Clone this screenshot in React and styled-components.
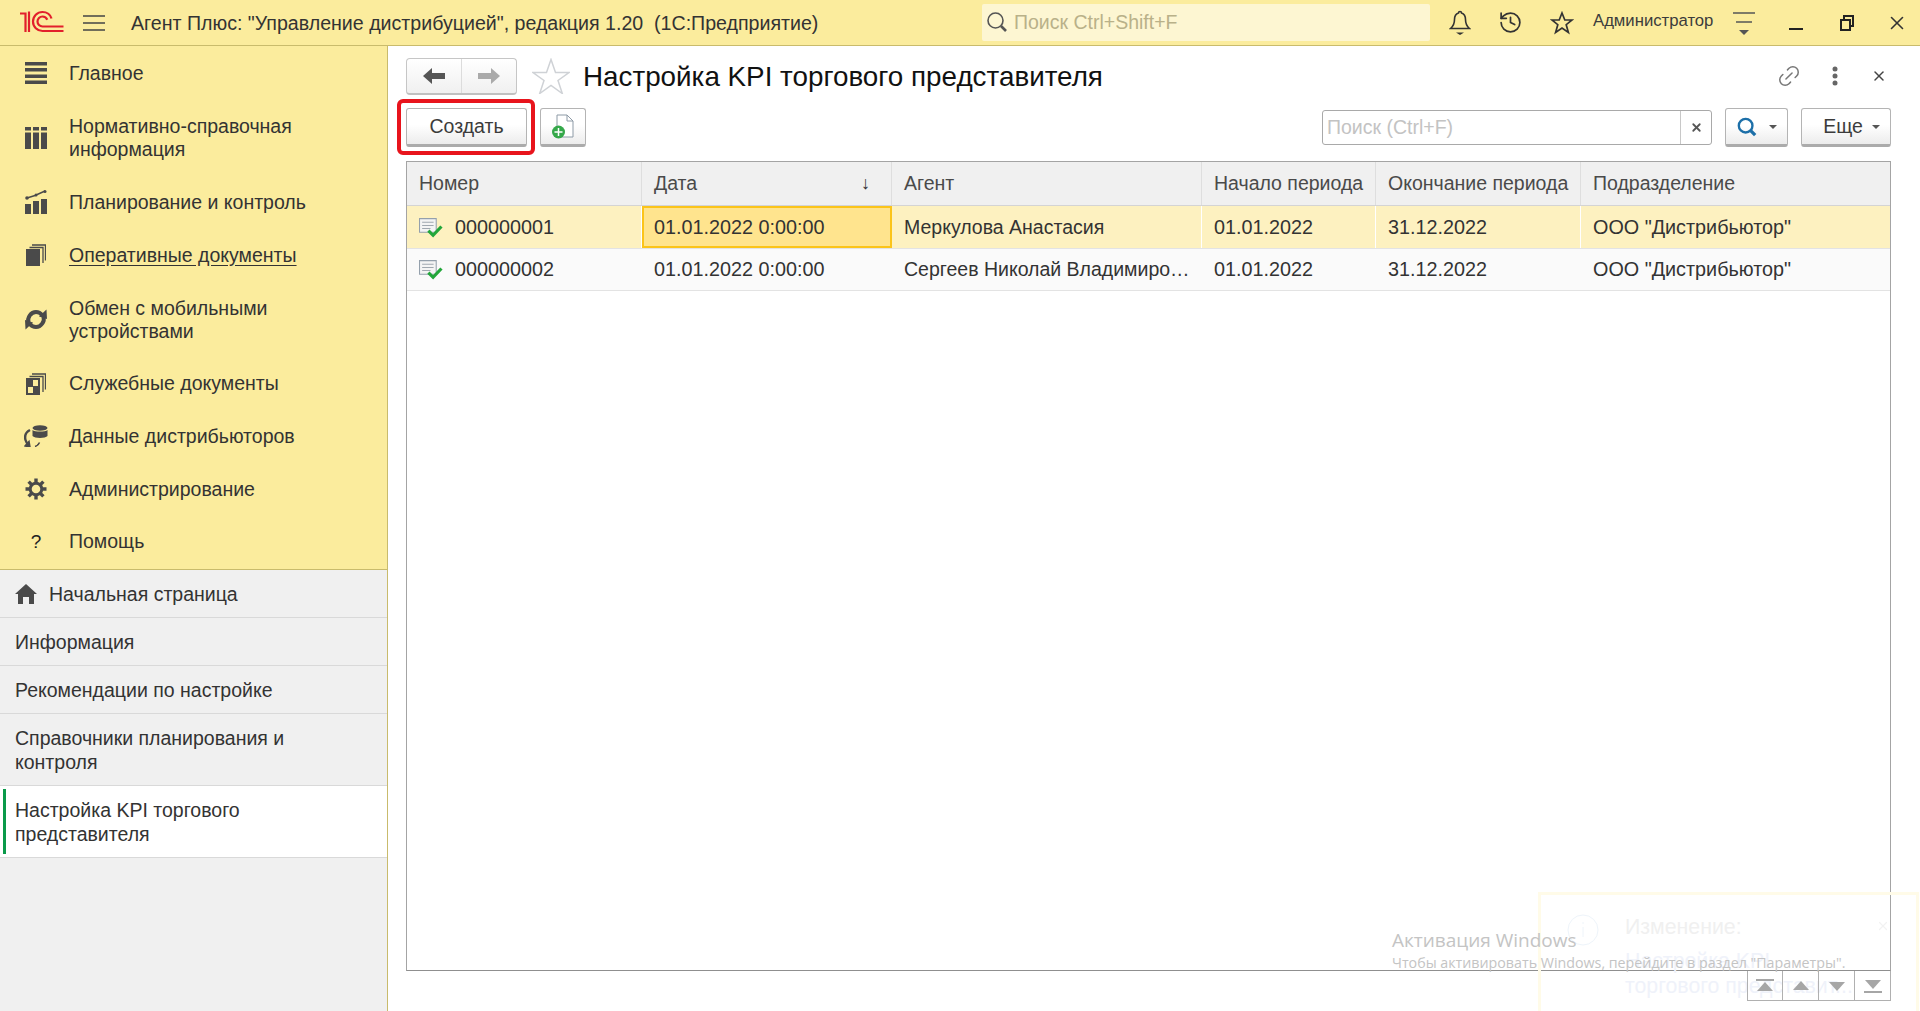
import React from 'react';
import styled, { createGlobalStyle } from 'styled-components';
import { History, Link2, X } from 'lucide-react';

const GlobalStyle = createGlobalStyle`
  html, body { margin: 0; padding: 0; height: 100%; background: #fff; }
  body { font-family: "Liberation Sans", Arial, sans-serif; overflow: hidden; }
  #root { height: 100%; }
  * { box-sizing: border-box; }
`;

const Page = styled.div`
  width: 1920px;
  height: 1011px;
  display: flex;
  flex-direction: column;
  position: relative;
  overflow: hidden;
`;

/* top bar */
const TopBar = styled.header`
  height: 46px;
  flex: none;
  display: flex;
  align-items: center;
  background: #fbec9d;
  border-bottom: 1px solid #c9bb6c;
  color: #333;
  overflow: hidden;
`;

const Logo = styled.svg`
  width: 44px;
  height: 24px;
  margin: 0 0 2px 20px;
  flex: none;
`;

const Burger = styled.svg`
  width: 22px;
  height: 16px;
  margin: 0 0 0 19px;
  flex: none;
`;

const AppTitle = styled.div`
  margin: 1px 0 0 26px;
  width: 851px;
  flex: none;
  font-size: 19.6px;
  white-space: pre;
  color: #333;
`;

const TopSearch = styled.div`
  width: 448px;
  height: 37px;
  flex: none;
  margin-bottom: 1px;
  background: #fdf6d2;
  border-radius: 2px;
  display: flex;
  align-items: center;
  padding-left: 4px;
  gap: 6px;
  font-size: 19.5px;
  color: #b9b189;
`;

const TopIcons = styled.div`
  display: flex;
  align-items: center;
  flex: none;
  margin-left: 4px;
`;

const TopIcon = styled.span`
  width: ${(props) => props.$w || 51}px;
  flex: none;
  display: flex;
  justify-content: center;
  align-items: center;
  color: #333;
`;

const UserName = styled.div`
  font-size: 16.7px;
  width: 138px;
  flex: none;
  margin-left: 6px;
  margin-bottom: 3px;
  color: #3c3c3c;
  white-space: nowrap;
`;

/* body */
const Body = styled.div`
  flex: 1;
  display: flex;
  min-height: 0;
`;

const Sidebar = styled.aside`
  width: 388px;
  flex: none;
  display: flex;
  flex-direction: column;
  background: #f0f0f0;
  border-right: 1px solid #c9bb6c;
`;

const NavList = styled.nav`
  height: 524px;
  flex: none;
  padding-top: 1px;
  background: #fbec9d;
  border-bottom: 1px solid #c9bb6c;
  overflow: hidden;
`;

const NavItem = styled.div`
  display: flex;
  align-items: center;
  padding: 14.85px 20px 14.85px 0;
  font-size: 19.5px;
  line-height: 23px;
  color: #333;
`;

const NavIcon = styled.span`
  width: 69px;
  flex: none;
  display: flex;
  justify-content: center;
  padding-left: 3px;
  color: #4a4a4a;
`;

const NavText = styled.span`
  text-decoration: ${(props) => (props.$link ? 'underline' : 'none')};
  text-underline-offset: 3px;
`;

const Question = styled.span`
  font-size: 19px;
  color: #222;
`;

const OpenTab = styled.div`
  position: relative;
  display: flex;
  align-items: center;
  gap: 12px;
  padding: 12px 15px 11px;
  font-size: 19.5px;
  line-height: 24px;
  color: #333;
  background: ${(props) => (props.$active ? '#fff' : '#f0f0f0')};
  border-bottom: 1px solid #d9d9d9;
  &::before {
    content: ${(props) => (props.$active ? '""' : 'none')};
    position: absolute;
    left: 3px;
    top: 3px;
    bottom: 3px;
    width: 3px;
    background: #0a9a4a;
  }
`;

/* main form */
const Main = styled.main`
  flex: 1;
  min-width: 0;
  display: flex;
  flex-direction: column;
  padding: 12px 29px 10px 18px;
  background: #fff;
`;

const FormHeader = styled.div`
  height: 36px;
  flex: none;
  display: flex;
  align-items: center;
`;

const NavGroup = styled.div`
  width: 111px;
  height: 37px;
  display: flex;
  border: 1px solid #c6c6c6;
  border-bottom: 2px solid #c0c0c0;
  border-radius: 4px;
  background: linear-gradient(#fff, #f0f0f0);
`;

const NavArrow = styled.span`
  flex: 1;
  display: flex;
  align-items: center;
  justify-content: center;
  & + & { border-left: 1px solid #dcdcdc; }
`;

const FavStar = styled.svg`
  width: 38px;
  height: 36px;
  margin-left: 15px;
  flex: none;
`;

const FormTitle = styled.h1`
  margin: 2px 0 0 13px;
  font-size: 27.8px;
  font-weight: 400;
  color: #111;
  flex: 1;
  white-space: nowrap;
`;

const FormActions = styled.div`
  display: flex;
  align-items: center;
  color: #777;
`;

const ActionIcon = styled.span`
  width: ${(props) => props.$w || 45}px;
  display: flex;
  justify-content: center;
  align-items: center;
`;

const Toolbar = styled.div`
  height: 39px;
  margin-top: 14px;
  flex: none;
  display: flex;
  align-items: center;
`;

const Button = styled.button`
  width: ${(props) => props.$w}px;
  height: 39px;
  padding: 0 0 0 ${(props) => props.$pad || 0}px;
  margin-left: ${(props) => props.$ml || 0}px;
  flex: none;
  display: flex;
  align-items: center;
  justify-content: center;
  gap: ${(props) => props.$gap || 0}px;
  font-family: inherit;
  font-size: 19.5px;
  color: #3c3c3c;
  background: linear-gradient(#fff 45%, #ececec);
  border: 1px solid #b4b4b4;
  border-bottom: 3px solid #ababab;
  border-radius: 3px;
`;

const Marked = styled.div`
  position: relative;
  margin-right: 13px;
  &::after {
    content: "";
    position: absolute;
    inset: -9px -8px -8px -9px;
    border: 4px solid #e8141c;
    border-radius: 6px;
    pointer-events: none;
  }
`;

const Caret = styled.i`
  width: 0;
  height: 0;
  border-left: 4px solid transparent;
  border-right: 4px solid transparent;
  border-top: 4px solid #555;
`;

const SearchField = styled.div`
  width: 390px;
  height: 35px;
  margin-left: auto;
  display: flex;
  border: 1px solid #a9a9a9;
  border-radius: 3px;
  background: #fff;
`;

const SearchInput = styled.div`
  flex: 1;
  display: flex;
  align-items: center;
  padding-left: 4px;
  font-size: 19.5px;
  color: #c3c3c3;
`;

const SearchClear = styled.div`
  width: 31px;
  border-left: 1px solid #c8c8c8;
  display: flex;
  align-items: center;
  justify-content: center;
  color: #555;
`;

const TableBox = styled.div`
  flex: 1;
  margin-top: 14px;
  min-height: 0;
  border: 1px solid #a4a4a4;
  border-bottom-color: #8f8f8f;
`;

const Row = styled.div`
  display: grid;
  grid-template-columns: 235px 250px 310px 174px 205px 1fr;
  height: ${(props) => props.$h}px;
  background: ${(props) => props.$bg};
  border-bottom: 1px solid ${(props) => props.$line || '#e3e3e3'};
`;

const HeadCell = styled.div`
  display: flex;
  align-items: center;
  justify-content: space-between;
  padding: 0 21px 0 12px;
  font-size: 19.5px;
  color: #4a4a4a;
  border-right: 1px solid #dedede;
  white-space: nowrap;
  &:last-child { border-right: none; }
`;

const SortMark = styled.span`
  font-size: 18px;
  color: #333;
`;

const Cell = styled.div`
  display: flex;
  align-items: center;
  gap: 12px;
  padding: 0 12px;
  font-size: 19.8px;
  color: #333;
  white-space: nowrap;
  border-right: 1px solid ${(props) => (props.$sep ? '#fff' : 'transparent')};
  &:last-child { border-right: none; }
`;

const AgentCell = styled(Cell)`
  font-size: 19.5px;
`;

const FocusCell = styled(Cell)`
  padding: 0 10px;
  background: #ffe48e;
  border: 2px solid #fbc41a;
`;

const Pager = styled.div`
  height: 30px;
  flex: none;
  display: flex;
  justify-content: flex-end;
  position: relative;
  z-index: 1;
`;

const PagerButton = styled.span`
  width: 36px;
  display: flex;
  align-items: center;
  justify-content: center;
  border: 1px solid #b0b0b0;
  border-top: none;
  & + & { border-left: none; }
`;

/* things lying over the page */
const Notice = styled.div`
  position: absolute;
  left: 1538px;
  top: 892px;
  width: 381px;
  height: 119px;
  border: 3px solid #fffbe8;
  border-bottom: none;
  pointer-events: none;
`;

const NoticeIcon = styled.svg`
  position: absolute;
  left: 26px;
  top: 19px;
`;

const NoticeHead = styled.div`
  position: absolute;
  left: 84px;
  top: 20px;
  font-size: 21.3px;
  color: #f0f0f0;
`;

const NoticeBody = styled.div`
  position: absolute;
  left: 84px;
  top: 54px;
  font-size: 21.3px;
  line-height: 25px;
  color: #eff2fa;
  white-space: nowrap;
`;

const NoticeClose = styled.span`
  position: absolute;
  left: 335px;
  top: 24px;
  color: #f2f2f2;
`;

const Watermark = styled.div`
  position: absolute;
  left: 1392px;
  top: 927px;
  font-family: "Open Sans", sans-serif;
  color: #c4c4c4;
  pointer-events: none;
  white-space: nowrap;
`;

const WatermarkHead = styled.div`
  font-size: 19px;
  line-height: 26px;
`;

const WatermarkText = styled.div`
  font-size: 14.25px;
  line-height: 20px;
`;

const LogoMark = () => (
  <Logo viewBox="0 0 44 24" fill="none" stroke="#e2202c">
    <path d="M0 3.500h5.500V22" strokeWidth="2.200" />
    <path d="M9 1.500V22" strokeWidth="2.200" />
    <path d="M43.500 21H22.500a9.500 9.500 0 1 1 0-19c4.500 0 8 3 9 6.500" strokeWidth="2.200" />
    <path d="M43.500 16.500H22.500a5 5 0 1 1 0-10c2.300 0 4 1.300 4.800 3.200" strokeWidth="2.200" />
  </Logo>
);

const BurgerIcon = () => (
  <Burger viewBox="0 0 22 16" stroke="#444" strokeWidth="1.500">
    <path d="M0 1h22M0 8h22M0 15h22" />
  </Burger>
);

const Magnifier = ({ color = '#555', size = 22, width = 1.6 }) => (
  <svg width={size} height={size} viewBox="0 0 22 22" fill="none" stroke={color} strokeWidth={width}>
    <circle cx="9.500" cy="9.500" r="7.500" />
    <path d="M15 15l5 5" strokeWidth={width + 1} />
  </svg>
);

const BellIcon = () => (
  <svg width="22" height="26" viewBox="0 0 22 26" fill="none" stroke="#333" strokeWidth="1.600">
    <path d="M11 1.500c1 0 1.500.7 1.500 1.500 3 1 4 3.500 4 6.500 0 4 1.500 7 4 9H1.500c2.500-2 4-5 4-9 0-3 1-5.500 4-6.500 0-.8.5-1.500 1.500-1.500z" />
    <path d="M7 22.500h8l-4 2.500z" fill="#333" stroke="none" />
  </svg>
);

const StarLine = ({ size = 24 }) => (
  <svg width={size} height={size} viewBox="0 0 24 24" fill="none" stroke="#333" strokeWidth="1.700">
    <path d="M12 2l2.800 7h7.200l-5.800 4.700 2.200 7.800L12 17l-6.400 4.500 2.200-7.800L2 9h7.200z" />
  </svg>
);

const FilterLines = () => (
  <svg width="22" height="24" viewBox="0 0 22 24" stroke="#555" strokeWidth="1.500">
    <path d="M0 2h22M3 11h16" />
    <path d="M6 19h10l-5 5z" fill="#555" stroke="none" />
  </svg>
);

const NavSvg = ({ children, w = 22, h = 22 }) => (
  <svg width={w} height={h} viewBox={`0 0 ${w} ${h}`} fill="#4a4a4a">{children}</svg>
);

const MainIcon = () => (
  <NavSvg>
    <path d="M0 0h22v3.500H0zM0 6h22v3.500H0zM0 12.500h22V16H0zM0 18.500h22V22H0z" />
  </NavSvg>
);

const CatalogIcon = () => (
  <NavSvg>
    <path d="M0 0h6v3.500H0zM8 0h6v3.500H8zM16 0h6v3.500h-6zM0 5.500h6V22H0zM8 5.500h6V22H8zM16 5.500h6V22h-6z" />
  </NavSvg>
);

const ChartIcon = () => (
  <NavSvg h={24}>
    <path d="M0 14h6v10H0zM8 11h6v13H8zM16 9h6v15h-6z" />
    <path d="M2 8l8-2.500L20 1" stroke="#4a4a4a" strokeWidth="1.400" fill="none" />
    <circle cx="2" cy="8" r="1.800" />
    <circle cx="11" cy="5" r="1.500" />
    <circle cx="20" cy="1.500" r="1.500" />
  </NavSvg>
);

const DocsIcon = ({ checker }) => (
  <NavSvg w={20} h={22}>
    <path d="M0 5h14v17H0z" />
    {checker && <path d="M7 7h5v6H7zM2 14h5v6H2z" fill="#fbec9d" />}
    <path d="M3.500 3.500h13.500v15.500M6 1h13.500v15.500" fill="none" stroke="#4a4a4a" strokeWidth="1.300" />
  </NavSvg>
);

const SyncIcon = () => (
  <NavSvg h={23}>
    <g fill="none" stroke="#4a4a4a" strokeWidth="4">
      <path d="M3.500 14.500C2 9.500 6 4 11 4c2.500 0 4.500 1 6 3" />
      <path d="M18.500 8.500C20 13.500 16 19 11 19c-2.500 0-4.500-1-6-3" />
    </g>
    <path d="M21.500 1.500l.5 9.500-8-2.500zM.5 21.500l-.5-9.500 8 2.500z" />
  </NavSvg>
);

const DataIcon = () => (
  <NavSvg w={24} h={22}>
    <ellipse cx="16" cy="3" rx="7.500" ry="2.800" />
    <path d="M8.500 5c2 2 13 2 15 0v6c-2 2.500-13 2.500-15 0z" />
    <path d="M6 5C2 7 .5 11 1.500 15c.5 2 1.700 3.500 3 4.500" fill="none" stroke="#4a4a4a" strokeWidth="2.400" />
    <path d="M5 16.500l1 5.500-5-1zM11 21.500c2-.5 3.500-1.500 4.500-4" fill="#4a4a4a" stroke="#4a4a4a" strokeWidth="1.500" />
  </NavSvg>
);

const GearIcon = () => (
  <NavSvg>
    <circle cx="11" cy="11" r="5.800" fill="none" stroke="#4a4a4a" strokeWidth="3" />
    <g stroke="#4a4a4a" strokeWidth="3.400">
      <path d="M11 .5v4M11 17.500v4M.5 11h4M17.500 11h4M3.600 3.600l2.800 2.800M15.600 15.600l2.800 2.800M18.400 3.600l-2.800 2.800M6.400 15.600l-2.800 2.800" />
    </g>
  </NavSvg>
);

const HomeIcon = () => (
  <svg width="22" height="20" viewBox="0 0 22 20" fill="#4a4a4a">
    <path d="M11 0l11 10h-3v10h-5v-7H8v7H3V10H0z" />
  </svg>
);

const ArrowIcon = ({ left, color }) => (
  <svg width="22" height="16" viewBox="0 0 22 16" fill={color}>
    <path d={left ? 'M0 8l9-8v5h13v6H9v5z' : 'M22 8l-9-8v5H0v6h13v5z'} />
  </svg>
);

const RowDoc = () => (
  <svg width="24" height="21" viewBox="0 0 23 20" fill="none">
    <path d="M.5 1.500h16v13H.5z" fill="#f4f4f4" stroke="#94a0ac" />
    <path d="M3 5h11M3 8h11M3 11h8" stroke="#a0a8b0" />
    <path d="M9 13l4.500 4.500L21.500 9" stroke="#22a63a" strokeWidth="3" />
  </svg>
);

const AddDoc = () => (
  <svg width="24" height="26" viewBox="0 0 24 26" fill="none">
    <path d="M6 1h10l6 6v16H6z" fill="#fff" stroke="#8d9aa6" />
    <path d="M16 1v6h6" stroke="#8d9aa6" />
    <circle cx="7.500" cy="18" r="6.500" fill="#35a84a" />
    <path d="M7.500 14v8M3.500 18h8" stroke="#fff" strokeWidth="1.500" />
  </svg>
);

const PagerIcon = ({ up, bar }) => (
  <svg width="20" height="14" viewBox="0 0 20 14" fill="#a6a6a6">
    {up ? <path d={bar ? 'M10 3l8 9H2z' : 'M10 2l8 9H2z'} /> : <path d={bar ? 'M2 1h16l-8 9z' : 'M2 3h16l-8 9z'} />}
    {bar && <path d={up ? 'M1 0h18v2H1z' : 'M1 12h18v2H1z'} />}
  </svg>
);

const navItems = [
  { icon: <MainIcon />, text: 'Главное' },
  { icon: <CatalogIcon />, text: <>Нормативно-справочная<br />информация</> },
  { icon: <ChartIcon />, text: 'Планирование и контроль' },
  { icon: <DocsIcon />, text: 'Оперативные документы', link: true },
  { icon: <SyncIcon />, text: <>Обмен с мобильными<br />устройствами</> },
  { icon: <DocsIcon checker />, text: 'Служебные документы' },
  { icon: <DataIcon />, text: 'Данные дистрибьюторов' },
  { icon: <GearIcon />, text: 'Администрирование' },
  { icon: <Question>?</Question>, text: 'Помощь' },
];

const tabs = [
  { text: 'Начальная страница', home: true },
  { text: 'Информация' },
  { text: 'Рекомендации по настройке' },
  { text: <>Справочники планирования и<br />контроля</> },
  { text: <>Настройка KPI торгового<br />представителя</>, active: true },
];

const rows = [
  { id: '000000001', agent: 'Меркулова Анастасия', selected: true },
  { id: '000000002', agent: 'Сергеев Николай Владимиро…' },
];

export default function App() {
  return (
    <Page>
      <GlobalStyle />
      <TopBar>
        <LogoMark />
        <BurgerIcon />
        <AppTitle>{'Агент Плюс: "Управление дистрибуцией", редакция 1.20  (1С:Предприятие)'}</AppTitle>
        <TopSearch>
          <Magnifier />
          Поиск Ctrl+Shift+F
        </TopSearch>
        <TopIcons>
          <TopIcon><BellIcon /></TopIcon>
          <TopIcon><History size={25} strokeWidth={1.700} absoluteStrokeWidth /></TopIcon>
          <TopIcon><StarLine /></TopIcon>
          <UserName>Администратор</UserName>
          <TopIcon $w={26}><FilterLines /></TopIcon>
          <TopIcon $w={78}>
            <svg width="14" height="14" viewBox="0 0 14 14" stroke="#222" strokeWidth="2"><path d="M0 13h14" /></svg>
          </TopIcon>
          <TopIcon $w={24}>
            <svg width="14" height="16" viewBox="0 0 14 16" fill="none" stroke="#222" strokeWidth="2">
              <path d="M1 5h9v10H1zM4 5V1h9v10h-3" />
            </svg>
          </TopIcon>
          <TopIcon $w={76}><X size={22} strokeWidth={1.600} absoluteStrokeWidth /></TopIcon>
        </TopIcons>
      </TopBar>

      <Body>
        <Sidebar>
          <NavList>
            {navItems.map((item, i) => (
              <NavItem key={i}>
                <NavIcon>{item.icon}</NavIcon>
                <NavText $link={item.link}>{item.text}</NavText>
              </NavItem>
            ))}
          </NavList>
          {tabs.map((tab, i) => (
            <OpenTab key={i} $active={tab.active}>
              {tab.home && <HomeIcon />}
              <span>{tab.text}</span>
            </OpenTab>
          ))}
        </Sidebar>

        <Main>
          <FormHeader>
            <NavGroup>
              <NavArrow><ArrowIcon left color="#555" /></NavArrow>
              <NavArrow><ArrowIcon color="#aaa" /></NavArrow>
            </NavGroup>
            <FavStar viewBox="0 0 38 36" fill="none" stroke="#cfd2d6" strokeWidth="1.500">
              <path d="M19 1.500l4.500 13h13.500l-11 8 4.300 13L19 27.500l-11.300 8 4.300-13-11-8h13.500z" />
            </FavStar>
            <FormTitle>Настройка KPI торгового представителя</FormTitle>
            <FormActions>
              <ActionIcon $w={28}><Link2 size={26} strokeWidth={1.500} absoluteStrokeWidth style={{ transform: 'rotate(-45deg)' }} /></ActionIcon>
              <ActionIcon $w={64}>
                <svg width="6" height="20" viewBox="0 0 6 20" fill="#666">
                  <circle cx="3" cy="3" r="2.500" /><circle cx="3" cy="10" r="2.500" /><circle cx="3" cy="17" r="2.500" />
                </svg>
              </ActionIcon>
              <ActionIcon $w={24}><X size={16} strokeWidth={1.500} absoluteStrokeWidth color="#444" /></ActionIcon>
            </FormActions>
          </FormHeader>

          <Toolbar>
            <Marked><Button $w={121}>Создать</Button></Marked>
            <Button $w={46}><AddDoc /></Button>
            <SearchField>
              <SearchInput>Поиск (Ctrl+F)</SearchInput>
              <SearchClear><X size={13} strokeWidth={1.800} absoluteStrokeWidth /></SearchClear>
            </SearchField>
            <Button $w={63} $gap={12} $ml={13}>
              <Magnifier color="#1c6fa8" size={20} width={2.600} />
              <Caret />
            </Button>
            <Button $w={90} $gap={9} $ml={13} $pad={11}>
              Еще
              <Caret />
            </Button>
          </Toolbar>

          <TableBox>
            <Row $h={44} $bg="#f0f0f0" $line="#d4d4d4">
              <HeadCell>Номер</HeadCell>
              <HeadCell>Дата<SortMark>↓</SortMark></HeadCell>
              <HeadCell>Агент</HeadCell>
              <HeadCell>Начало периода</HeadCell>
              <HeadCell>Окончание периода</HeadCell>
              <HeadCell>Подразделение</HeadCell>
            </Row>
            {rows.map((row) => (
              <Row key={row.id} $h={row.selected ? 43 : 42} $bg={row.selected ? '#fdf1c0' : '#fafafa'}>
                <Cell $sep={row.selected}><RowDoc />{row.id}</Cell>
                {row.selected ? <FocusCell>01.01.2022 0:00:00</FocusCell> : <Cell>01.01.2022 0:00:00</Cell>}
                <AgentCell $sep={row.selected}>{row.agent}</AgentCell>
                <Cell $sep={row.selected}>01.01.2022</Cell>
                <Cell $sep={row.selected}>31.12.2022</Cell>
                <Cell>{'ООО "Дистрибьютор"'}</Cell>
              </Row>
            ))}
          </TableBox>
          <Pager>
            <PagerButton><PagerIcon up bar /></PagerButton>
            <PagerButton><PagerIcon up /></PagerButton>
            <PagerButton><PagerIcon /></PagerButton>
            <PagerButton><PagerIcon bar /></PagerButton>
          </Pager>
        </Main>
      </Body>

      <Notice>
        <NoticeIcon width="32" height="32" viewBox="0 0 32 32" fill="none" stroke="#eef4fa">
          <circle cx="16" cy="16" r="15" />
          <path d="M16 8v2M16 13v10" />
        </NoticeIcon>
        <NoticeHead>Изменение:</NoticeHead>
        <NoticeBody>Настройка KPI<br />торгового представит...</NoticeBody>
        <NoticeClose><X size={14} strokeWidth={1.200} absoluteStrokeWidth /></NoticeClose>
      </Notice>
      <Watermark>
        <WatermarkHead>Активация Windows</WatermarkHead>
        <WatermarkText>{'Чтобы активировать Windows, перейдите в раздел "Параметры".'}</WatermarkText>
      </Watermark>
    </Page>
  );
}
